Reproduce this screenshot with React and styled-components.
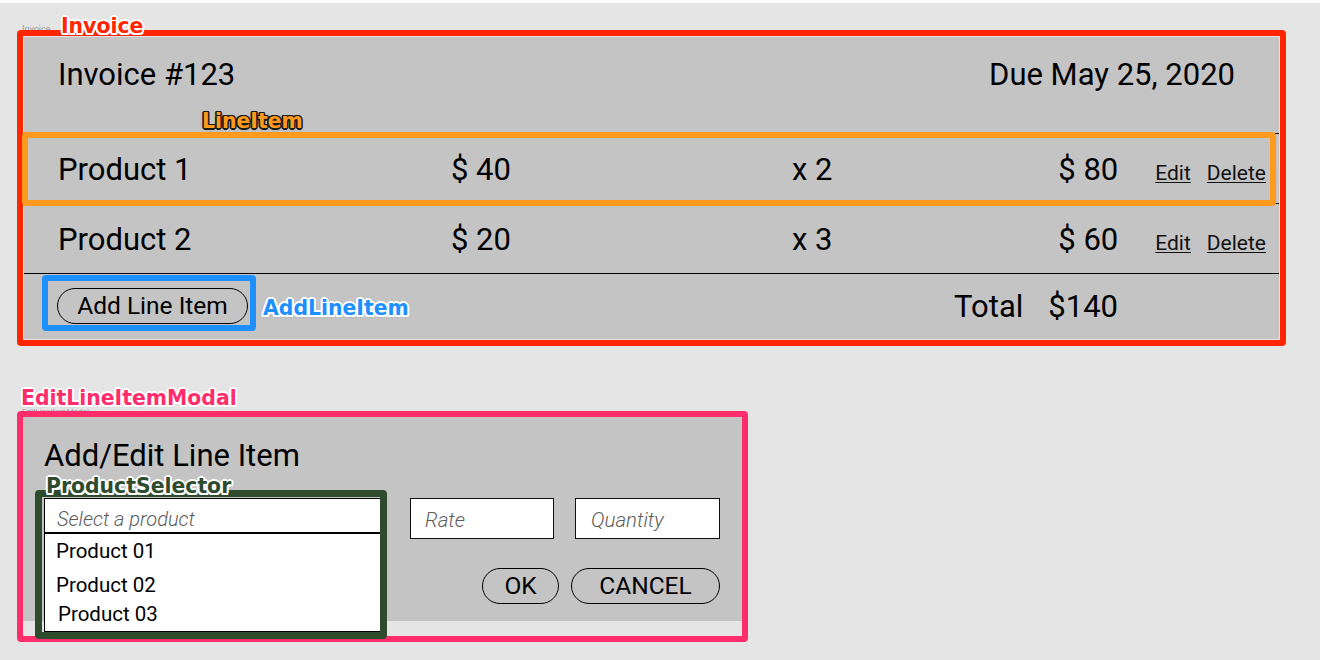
import React from "react";
import styled, { createGlobalStyle } from "styled-components";

const GlobalStyle = createGlobalStyle`
  html, body { margin: 0; padding: 0; background: #ffffff; }
  body { font-family: Roboto, "Noto Sans", sans-serif; color: #000; }
  * { box-sizing: border-box; }
`;

const outline = (c, w) => `
  ${-w}px 0 0 ${c}, ${w}px 0 0 ${c}, 0 ${-w}px 0 ${c}, 0 ${w}px 0 ${c},
  ${-w * 0.75}px ${-w * 0.75}px 0 ${c}, ${w * 0.75}px ${-w * 0.75}px 0 ${c},
  ${-w * 0.75}px ${w * 0.75}px 0 ${c}, ${w * 0.75}px ${w * 0.75}px 0 ${c},
  0 1px 3px rgba(0,0,0,0.35)
`;

const Canvas = styled.main`
  position: relative;
  z-index: 0;
  width: 1320px;
  height: 657px;
  margin-top: 3px;
  background: #e5e5e5;
  padding: 27px 0 0 17px;
  display: flex;
  flex-direction: column;
  align-items: flex-start;
  gap: 65px;
`;

const Frame = styled.div`
  position: relative;
  border: 6px solid ${(p) => p.$color};
  border-radius: 4px;
  padding: ${(p) => p.$pad || "0"};
`;

const Tag = styled.span`
  position: absolute;
  left: ${(p) => p.$x}px;
  top: ${(p) => p.$y}px;
  z-index: 3;
  font-family: "DejaVu Sans", sans-serif;
  font-weight: bold;
  font-size: 20.4px;
  line-height: 20px;
  white-space: nowrap;
  color: ${(p) => p.$color};
  text-shadow: ${(p) => outline(p.$stroke || "#ffffff", p.$w || 2)};
  pointer-events: none;
`;

const FrameName = styled.span`
  position: absolute;
  left: ${(p) => p.$x}px;
  top: ${(p) => p.$y}px;
  z-index: -1;
  font-family: Roboto, sans-serif;
  font-size: ${(p) => p.$size || 9}px;
  line-height: 10px;
  color: #9a9a9a;
  white-space: nowrap;
`;

/* ---------- Invoice ---------- */

const InvoicePanel = styled.section`
  width: 1255px;
  height: 302px;
  background: #c4c4c4;
  display: flex;
  flex-direction: column;
`;

const Header = styled.header`
  height: 96px;
  display: flex;
  justify-content: space-between;
  align-items: flex-start;
  padding: 22px 44px 0 34px;
  font-size: 31px;
  line-height: 31px;
`;

const LineRow = styled.div`
  position: relative;
  height: 70px;
  border-top: 1px solid #000;
  display: flex;
  align-items: baseline;
  padding: 20px 13px 0 34px;
  font-size: 31px;
  line-height: 31px;
`;

const Cell = styled.div`
  width: ${(p) => (p.$w ? `${p.$w}px` : "auto")};
  flex: ${(p) => (p.$grow ? 1 : "none")};
  text-align: ${(p) => p.$align || "left"};
  white-space: nowrap;
`;

const Actions = styled.div`
  display: flex;
  gap: 16px;
  margin-left: 37px;
  font-size: 21px;
  line-height: 21px;
`;

const ActionLink = styled.a`
  color: #111;
  text-decoration: underline;
  text-decoration-thickness: 1px;
  text-underline-offset: 2px;
  cursor: pointer;
`;

const Highlight = styled.div`
  position: absolute;
  top: -2px;
  left: -2px;
  right: 3px;
  bottom: -3px;
  z-index: 1;
  border: 6px solid #ff9a1f;
  border-radius: 4px;
  pointer-events: none;
`;

const Footer = styled.footer`
  flex: 1;
  border-top: 1px solid #000;
  display: flex;
  align-items: center;
  padding: 0 161px 0 18px;
`;

const AddFrame = styled(Frame)`
  align-self: flex-start;
  margin-top: 1px;
`;

const PillButton = styled.button`
  width: ${(p) => p.$w}px;
  height: 36px;
  border: 1.5px solid #000;
  border-radius: 18px;
  background: transparent;
  font-family: Roboto, sans-serif;
  font-size: 24.5px;
  line-height: 24px;
  color: #000;
  padding: 0;
  display: flex;
  align-items: center;
  justify-content: center;
  cursor: pointer;
`;

const Totals = styled.div`
  margin-left: auto;
  display: flex;
  gap: 25px;
  font-size: 31px;
  line-height: 31px;
`;

/* ---------- Modal ---------- */

const ModalPanel = styled.section`
  width: 719px;
  height: 204px;
  background: #c4c4c4;
  padding: 23px 22px 0 21px;
`;

const ModalTitle = styled.h2`
  margin: 0;
  font-weight: 400;
  font-size: 31px;
  line-height: 31px;
`;

const Fields = styled.div`
  margin-top: 27px;
  display: flex;
  align-items: flex-start;
`;

const SelectorWrap = styled.div`
  position: relative;
  z-index: 2;
  width: 337px;
`;

const SelectHead = styled.input`
  display: block;
  width: 100%;
  height: 36px;
  margin: 0;
  background: #fff;
  border: 1px solid #000;
  border-bottom-width: 2px;
  padding: 7px 12px 0;
  font-family: Roboto, sans-serif;
  font-style: italic;
  font-weight: 300;
  font-size: 20px;
  line-height: 20px;
  outline: none;
  &::placeholder { color: #5c5c5c; opacity: 1; }
`;

const DropList = styled.ul`
  position: absolute;
  top: 100%;
  left: 0;
  width: 100%;
  height: 98px;
  margin: 0;
  padding: 0 0 0 11px;
  list-style: none;
  background: #fff;
  border: 1px solid #000;
  border-top: none;
`;

const DropItem = styled.li`
  margin-top: ${(p) => p.$gap}px;
  padding-left: ${(p) => p.$indent || 0}px;
  font-size: 20.5px;
  line-height: 20px;
`;

const SelectorMark = styled.div`
  position: absolute;
  top: -8px;
  left: -9px;
  right: -6px;
  bottom: -105px;
  border: 7px solid #2f4b2d;
  border-radius: 4px;
  pointer-events: none;
`;

const TextField = styled.input`
  width: ${(p) => p.$w}px;
  height: 41px;
  margin: 0 0 0 ${(p) => p.$ml}px;
  background: #fff;
  border: 1.5px solid #111;
  padding: 2px ${(p) => p.$pl}px 0;
  font-family: Roboto, sans-serif;
  font-style: italic;
  font-weight: 300;
  font-size: 20.5px;
  line-height: 20px;
  outline: none;
  &::placeholder { color: #5c5c5c; opacity: 1; }
`;

const ButtonRow = styled.div`
  margin-top: 29px;
  display: flex;
  justify-content: flex-end;
  gap: 12px;
`;

const lineItems = [
  { name: "Product 1", rate: "$ 40", qty: "x 2", amount: "$ 80", marked: true },
  { name: "Product 2", rate: "$ 20", qty: "x 3", amount: "$ 60" },
];

const products = [
  { name: "Product 01", gap: 7 },
  { name: "Product 02", gap: 14 },
  { name: "Product 03", gap: 9, indent: 2 },
];

export default function App() {
  return (
    <>
      <GlobalStyle />
      <Canvas>
        <Frame $color="#ff2600" $pad="1px">
          <FrameName $x={-1} $y={-12}>Invoice</FrameName>
          <Tag $x={38} $y={-20} $color="#ff2600">Invoice</Tag>
          <InvoicePanel>
            <Header>
              <span>Invoice #123</span>
              <span>Due May 25, 2020</span>
            </Header>
            {lineItems.map((it) => (
              <LineRow key={it.name}>
                <Cell $w={393}>{it.name}</Cell>
                <Cell $w={341}>{it.rate}</Cell>
                <Cell $grow>{it.qty}</Cell>
                <Cell $align="right">{it.amount}</Cell>
                <Actions>
                  <ActionLink>Edit</ActionLink>
                  <ActionLink>Delete</ActionLink>
                </Actions>
                {it.marked && (
                  <Highlight>
                    <Tag $x={174} $y={-27} $color="#ff9a1f" $stroke="#1a1a1a" $w={1.5}>
                      LineItem
                    </Tag>
                  </Highlight>
                )}
              </LineRow>
            ))}
            <Footer>
              <AddFrame $color="#1e8fff" $pad="7px 2px 1px 9px">
                <PillButton $w={191}>Add Line Item</PillButton>
                <Tag $x={215} $y={17} $color="#1e8fff">AddLineItem</Tag>
              </AddFrame>
              <Totals>
                <span>Total</span>
                <span>$140</span>
              </Totals>
            </Footer>
          </InvoicePanel>
        </Frame>

        <Frame $color="#ff2d6b" $pad="0 0 15px 0">
          <FrameName $x={-1} $y={-10} $size={8}>EditLineItemModal</FrameName>
          <Tag $x={-2} $y={-29} $color="#ff2d6b">EditLineItemModal</Tag>
          <ModalPanel>
            <ModalTitle>Add/Edit Line Item</ModalTitle>
            <Fields>
              <SelectorWrap>
                <SelectHead readOnly placeholder="Select a product" />
                <DropList>
                  {products.map((p) => (
                    <DropItem key={p.name} $gap={p.gap} $indent={p.indent}>
                      {p.name}
                    </DropItem>
                  ))}
                </DropList>
                <SelectorMark />
                <Tag $x={2} $y={-22} $color="#2f4b2d">ProductSelector</Tag>
              </SelectorWrap>
              <TextField $w={144} $ml={29} $pl={14} placeholder="Rate" />
              <TextField $w={145} $ml={21} $pl={15} placeholder="Quantity" />
            </Fields>
            <ButtonRow>
              <PillButton $w={77}>OK</PillButton>
              <PillButton $w={149}>CANCEL</PillButton>
            </ButtonRow>
          </ModalPanel>
        </Frame>
      </Canvas>
    </>
  );
}
